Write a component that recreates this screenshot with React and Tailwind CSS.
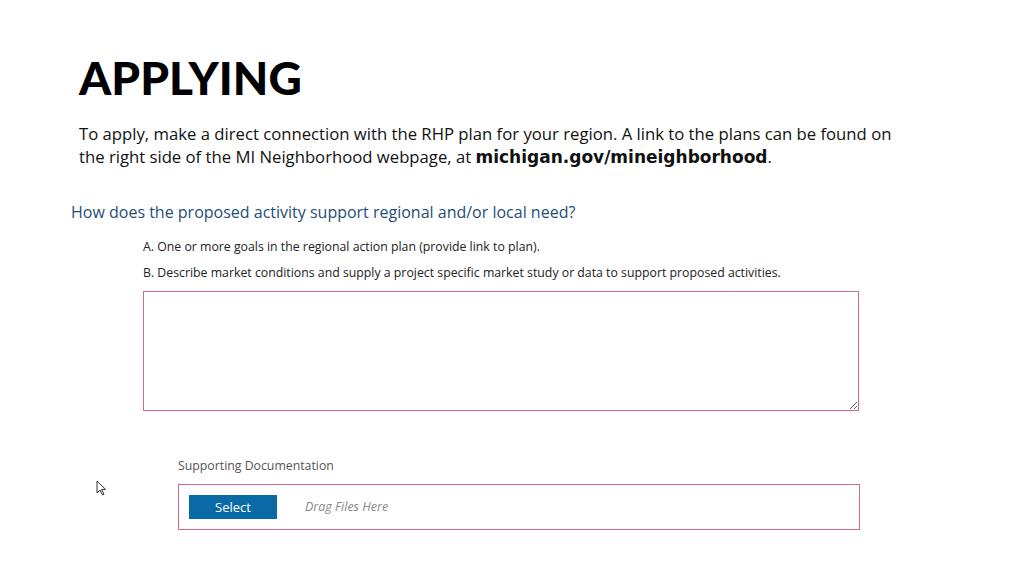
import { useState } from "react";

function CursorIcon() {
  return (
    <svg width="11" height="16" viewBox="0 0 11 16" className="block">
      <path d="M1 1 L1 13 L4 10 L6.5 15 L8 14.3 L5.6 9.4 L9.6 9.4 Z" fill="#fff" stroke="#333" strokeWidth="1" strokeLinejoin="round" />
    </svg>
  );
}

export default function App() {
  const [text, setText] = useState("");

  return (
    <div className="w-[1024px] h-[576px] bg-white overflow-hidden relative">
      <div className="pl-[79px] pt-[52px]">
        <h1 className="text-[46px] leading-[52px] font-black text-black" style={{ fontFamily: "'Lato', sans-serif" }}>
          APPLYING
        </h1>
        <p className="mt-[18px] text-[16.7px] leading-[23px] text-[#111] w-[880px]" style={{ fontFamily: "'Open Sans', sans-serif" }}>
          To apply, make a direct connection with the RHP plan for your region. A link to the plans can be found on
          <br />
          the right side of the MI Neighborhood webpage, at{" "}
          <span className="font-bold text-[17px]" style={{ fontFamily: "'DejaVu Sans', sans-serif" }}>michigan.gov/mineighborhood</span>.
        </p>
      </div>

      <div className="pl-[71px] mt-[32px]" style={{ fontFamily: "'Open Sans', sans-serif" }}>
        <h2 className="text-[16px] leading-[22px] text-[#1f4e79]">
          How does the proposed activity support regional and/or local need?
        </h2>
        <div className="pl-[72px]">
          <p className="mt-[16px] text-[12.3px] leading-[16px] text-[#222]">
            A. One or more goals in the regional action plan (provide link to plan).
          </p>
          <p className="mt-[10px] text-[12.3px] leading-[16px] text-[#222]">
            B. Describe market conditions and supply a project specific market study or data to support proposed activities.
          </p>
          <textarea
            value={text}
            onChange={(e) => setText(e.target.value)}
            className="mt-[10px] block w-[716px] h-[120px] border border-[#d9668f] bg-white outline-none p-2 text-sm"
          />
        </div>

        <div className="pl-[107px] mt-[47px]">
          <p className="text-[12.3px] leading-[16px] text-[#555]">Supporting Documentation</p>
          <div className="mt-[10px] w-[682px] h-[46px] border border-[#d9668f] flex items-center pl-[10px] gap-[28px]">
            <button className="w-[88px] h-[24px] bg-[#0a6aa6] text-white text-[13px] leading-[24px]">Select</button>
            <span className="text-[12.5px] italic text-[#888]">Drag Files Here</span>
          </div>
        </div>
      </div>

      <div className="absolute left-[96px] top-[480px]">
        <CursorIcon />
      </div>
    </div>
  );
}
